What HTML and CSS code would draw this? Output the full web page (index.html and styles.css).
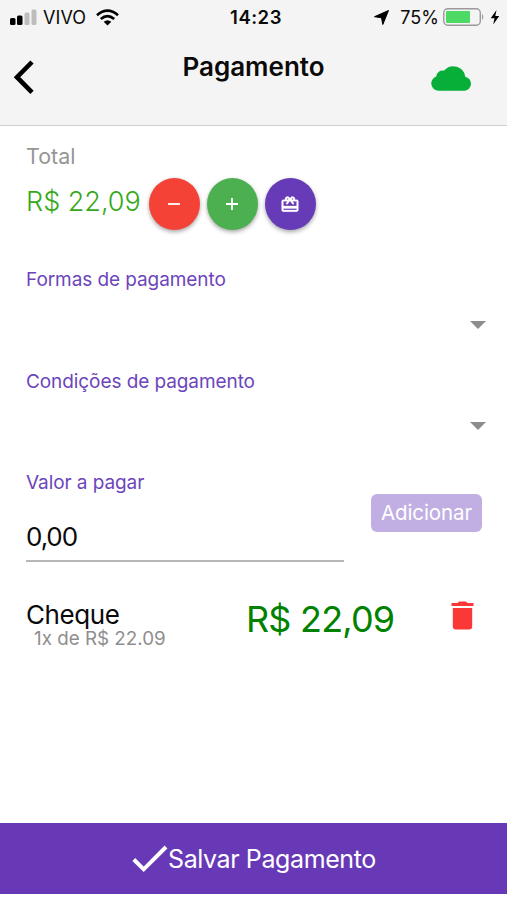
FILE: index.html
```html
<!DOCTYPE html>
<html lang="pt-BR">
<head>
<meta charset="utf-8">
<title>Pagamento</title>
<link rel="stylesheet" href="styles.css">
</head>
<body>
<div class="screen">
  <header class="header">
    <div class="status">
      <div class="status-left">
        <svg class="signal" width="27" height="17" viewBox="0 0 27 17"><rect x="0" y="9" width="5.5" height="7" rx="1.5"/><rect x="7" y="6.500" width="5.500" height="9.500" rx="1.500"/><rect x="14.500" y="3.500" width="5" height="12.500" rx="1.500" fill="#bdbdbd"/><rect x="21.500" y="0.500" width="5" height="15.500" rx="1.500" fill="#bdbdbd"/></svg>
        <span class="carrier">VIVO</span>
        <svg class="wifi" width="23" height="17" viewBox="0 0 23 17" fill="none" stroke="#000" stroke-width="2.700"><path d="M1 6.200Q11.500-2.800 22 6.200"/><path d="M4.800 10Q11.500 4.200 18.200 10"/><path d="M11.500 16.500L7.700 12.800Q11.500 9.700 15.300 12.800Z" fill="#000" stroke="none"/></svg>
      </div>
      <span class="clock">14:23</span>
      <div class="status-right">
        <svg class="locate" width="15" height="15" viewBox="0 0 15 15"><path d="M14.500.5L8.800 14.500L7.500 7.700L.5 6.700Z" stroke="#000" stroke-linejoin="round"/></svg>
        <span class="percent">75%</span>
        <svg class="battery" width="42" height="18" viewBox="0 0 42 18"><rect x=".8" y=".8" width="36.500" height="16.400" rx="4" fill="none" stroke="#999" stroke-width="1.400"/><rect x="3" y="3" width="24" height="12" rx="1" fill="#4cd964"/><path d="M39 5.800Q41.600 9 39 12.200Z" fill="#999"/></svg>
        <svg class="bolt" width="10" height="15" viewBox="0 0 10 15"><path d="M6.500 0L.7 8.300H4.500L3.200 14.500L9.300 5.900H5.300Z"/></svg>
      </div>
    </div>
    <div class="navbar">
      <svg class="back" width="22" height="34" viewBox="0 0 22 34" fill="none" stroke="#000" stroke-width="4.600"><path d="M19 2L4 17.200L19 32.400"/></svg>
      <h1 class="title">Pagamento</h1>
      <svg class="cloud" width="41" height="25" viewBox="0 0 41 25" fill="#07ae38"><path d="M7.500 24.700A7.300 7.300 0 0 1 5.200 10.500A6.500 6.500 0 0 1 13.200 4.600A12 12 0 0 1 34.300 10.700A7.100 7.100 0 0 1 33.800 24.700Z"/></svg>
    </div>
  </header>

  <main class="content">
    <div class="total-label">Total</div>
    <div class="total-row">
      <span class="total">R$ 22,09</span>
      <button class="fab fab-red"><svg width="12" height="12" viewBox="0 0 12 12"><path d="M0 6H12"/></svg></button>
      <button class="fab fab-green"><svg width="12" height="12" viewBox="0 0 12 12"><path d="M0 6H12M6 0V12"/></svg></button>
      <button class="fab fab-purple"><svg class="gift" width="20" height="19" viewBox="0 0 24 24" preserveAspectRatio="none"><path d="M20 6h-2.180c.11-.31.18-.65.18-1 0-1.660-1.340-3-3-3-1.050 0-1.960.54-2.500 1.350l-.5.670-.5-.68C10.960 2.540 10.050 2 9 2 7.340 2 6 3.340 6 5c0 .35.070.69.180 1H4c-1.110 0-1.990.89-1.990 2L2 19c0 1.110.89 2 2 2h16c1.110 0 2-.89 2-2V8c0-1.110-.89-2-2-2zm-5-2c.55 0 1 .45 1 1s-.45 1-1 1-1-.45-1-1 .45-1 1-1zM9 4c.55 0 1 .45 1 1s-.45 1-1 1-1-.45-1-1 .45-1 1-1zm11 15H4v-2h16v2zm0-5H4V8h5.080L7 10.830 8.620 12 11 8.760l1-1.360 1 1.360L15.380 12 17 10.830 14.920 8H20v6z"/></svg></button>
    </div>

    <div class="field">
      <label class="label">Formas de pagamento</label>
      <svg class="caret" width="16" height="8" viewBox="0 0 16 8"><path d="M0 0H16L8 8Z"/></svg>
    </div>
    <div class="field">
      <label class="label">Condições de pagamento</label>
      <svg class="caret" width="16" height="8" viewBox="0 0 16 8"><path d="M0 0H16L8 8Z"/></svg>
    </div>

    <div class="amount-row">
      <div class="amount">
        <label class="label">Valor a pagar</label>
        <div class="input">0,00</div>
      </div>
      <button class="add">Adicionar</button>
    </div>

    <div class="payment">
      <div class="payment-info">
        <div class="method">Cheque</div>
        <div class="detail">1x de R$ 22.09</div>
      </div>
      <span class="price">R$ 22,09</span>
      <svg class="trash" width="23" height="29" viewBox="0 0 23 29" fill="#fb3838"><path d="M.5 2H6.500L8 .5H15L16.500 2H22.500V5H.5ZM1.800 7H21.200V25.500Q21.200 28.500 18.200 28.500H4.800Q1.800 28.500 1.800 25.500Z"/></svg>
    </div>
  </main>

  <button class="save">
    <svg width="36" height="28" viewBox="0 0 36 28" fill="none" stroke="#fff" stroke-width="4"><path d="M1.800 14.500L11.700 24.300L34 2"/></svg>
    <span class="save-text">Salvar Pagamento</span>
  </button>
</div>
</body>
</html>
```
FILE: styles.css
```css
* { box-sizing: border-box; }
body {
  margin: 0;
  background: #fff;
  color: #0a0a0a;
  font-family: Inter, "Liberation Sans", sans-serif;
}
button { border: 0; padding: 0; font: inherit; color: #fff; }
svg { display: block; flex: none; }
span, label, h1 { white-space: nowrap; }
.screen { display: flex; flex-direction: column; height: 900px; overflow: hidden; }

.header { height: 126px; background: #f4f4f4; border-bottom: 1px solid #cecece; }
.status {
  display: grid;
  grid-template-columns: 1fr auto 1fr;
  align-items: center;
  height: 34px;
  padding: 0 7px 0 10px;
  font-size: 18px;
}
.status-left, .status-right { display: flex; align-items: center; }
.status-right { justify-content: flex-end; }
.signal { margin-right: 6px; }
.carrier { letter-spacing: 0.1px; margin-right: 10px; }
.clock { margin: 0 -1px 0 1px; font-weight: 600; font-size: 18.500px; letter-spacing: 0.5px; }
.locate { margin-right: 11px; }
.percent { letter-spacing: 0; margin-right: 4px; }
.battery { margin-right: 5px; }
.navbar {
  display: grid;
  grid-template-columns: 1fr auto 1fr;
  height: 90px;
  padding: 0 35px 0 13px;
}
.back { margin-top: 26px; }
.title {
  margin: 16px -11px 0 11px;
  font-size: 26px;
  line-height: 33px;
  font-weight: 600;
}
.cloud { justify-self: end; margin-top: 32px; }

.content { flex: none; height: 697px; padding: 18px 21px 0 26px; }
.total-label { font-size: 21.500px; line-height: 24px; color: #969696; }
.total-row { display: flex; height: 70px; padding-top: 10px; }
.total {
  width: 123px;
  font-size: 27px;
  font-weight: 300;
  line-height: 48px;
  color: #35a91b;
}
.fab {
  display: grid;
  place-items: center;
  width: 51px;
  height: 52px;
  margin-right: 7px;
  padding-right: 1px;
  border-radius: 50%;
  box-shadow: 0 2px 4px rgba(0, 0, 0, 0.35);
}
.fab svg { fill: none; stroke: #fff; stroke-width: 1.800; }
.fab .gift { fill: #fff; stroke: #fff; stroke-width: 0.4; }
.fab-red { background: #f44336; }
.fab-green { background: #4caf50; }
.fab-purple { background: #673ab7; }

.field { display: flex; flex-direction: column; height: 101.500px; padding-top: 30px; }
.label {
  display: block;
  font-size: 19px;
  letter-spacing: -0.08px;
  line-height: 24px;
  color: #6c45ba;
}
.caret { align-self: flex-end; margin-top: 28.500px; fill: #8d8d8d; }

.amount-row {
  display: flex;
  justify-content: space-between;
  height: 152px;
  padding: 30px 4px 0 0;
}
.amount { width: 318px; }
.input {
  height: 67px;
  padding-top: 26px;
  border-bottom: 2px solid #b6b8b8;
  font-size: 26px;
  letter-spacing: -1.1px;
  line-height: 32px;
}
.add {
  width: 111px;
  height: 38px;
  margin-top: 23px;
  border-radius: 6px;
  background: #c1afe3;
  font-size: 20.500px;
  letter-spacing: -0.1px;
  line-height: 38px;
}

.payment { display: flex; padding-top: 8px; }
.payment-info { width: 220px; }
.method { font-size: 26px; letter-spacing: -0.4px; line-height: 27px; }
.detail { margin-left: 8px; font-size: 18.800px; line-height: 21px; color: #8e8e8e; }
.price { width: 205px; font-size: 36px; letter-spacing: -0.8px; line-height: 37px; color: #008200; }

.save {
  display: flex;
  align-items: center;
  height: 71px;
  padding-left: 132px;
  background: #6839b6;
  font-size: 25px;
  letter-spacing: -0.4px;
}
```
